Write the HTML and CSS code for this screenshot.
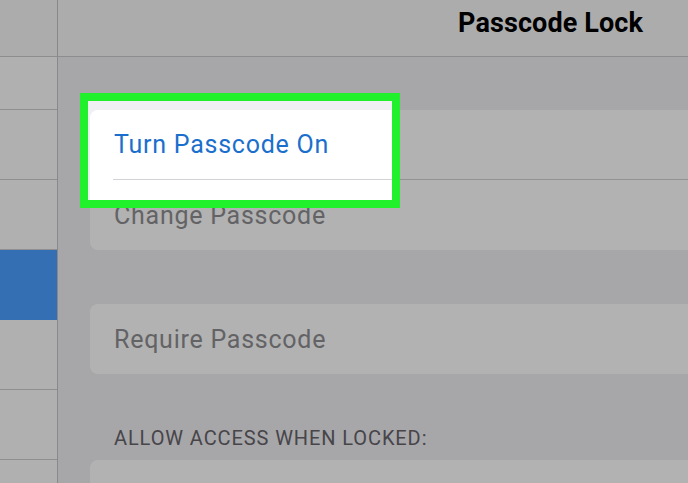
FILE: index.html
```html
<!DOCTYPE html>
<html>
<head>
  <title>Passcode Lock</title>
  <link rel="stylesheet" href="styles.css">
</head>
<body>

  <div class="screen">
    <aside class="sidebar">
      <div class="side-head"></div>
      <div class="side-row short"></div>
      <div class="side-row"></div>
      <div class="side-row"></div>
      <div class="side-row active"></div>
      <div class="side-row"></div>
      <div class="side-row"></div>
      <div class="side-row"></div>
    </aside>

    <section class="detail">
      <header class="detail-head">
        <h1>Passcode Lock</h1>
      </header>

      <div class="detail-body">
        <div class="spotlight"></div>

        <div class="group">
          <div class="cell link">Turn Passcode On</div>
          <div class="cell disabled">Change Passcode</div>
        </div>

        <div class="group">
          <div class="cell disabled">Require Passcode</div>
        </div>

        <p class="group-title">ALLOW ACCESS WHEN LOCKED:</p>

        <div class="group">
          <div class="cell"></div>
        </div>
      </div>
    </section>
  </div>

</body>
</html>
```

FILE: styles.css
```css
body {
  margin: 0;
  font-family: Roboto, 'Liberation Sans', sans-serif;
  background: #efeff4;
  overflow: hidden;
}

.screen {
  display: flex;
  width: 688px;
  height: 483px;
  overflow: hidden;
}

/* left master list */
.sidebar {
  width: 57px;
  flex-shrink: 0;
  background: #fcfcfc;
  border-right: 1px solid #c4c4c8;
}

.side-head {
  height: 56px;
  background: #f7f7f7;
  border-bottom: 1px solid #cbcbcf;
}

.side-row {
  height: 69px;
  border-bottom: 1px solid #cdcdd1;
}

.side-row.short {
  height: 52px;
}

.side-row.active {
  background: #4aa0ff;
  border-bottom-color: #4aa0ff;
}

/* detail pane */
.detail {
  flex: 1;
  min-width: 0;
}

.detail-head {
  height: 57px;
  box-sizing: border-box;
  background: #f7f7f7;
  border-bottom: 1px solid #cbcbcf;
  display: flex;
  align-items: center;
  justify-content: flex-end;
  padding: 0 45px 11px 0;
}

.detail-head h1 {
  margin: 0;
  font-size: 27px;
  font-weight: 700;
  color: #000;
  letter-spacing: 0.1px;
}

.detail-body {
  position: relative;
  padding: 53px 0 0 32px;
}

/* highlight box, dims everything around it */
.spotlight {
  position: absolute;
  left: 22px;
  top: 36px;
  width: 320px;
  height: 115px;
  box-sizing: border-box;
  border: 8px solid #21f02d;
  box-shadow: 0 0 0 2000px rgba(0, 0, 0, 0.3);
  z-index: 2;
}

.group {
  background: #fff;
  border-radius: 8px 0 0 8px;
  margin-right: -20px;
  padding-left: 23px;
  margin-bottom: 54px;
}

.cell {
  height: 69px;
  display: flex;
  align-items: center;
  padding-left: 1px;
  font-size: 25px;
  letter-spacing: 0.75px;
  border-bottom: 1px solid #d2d2d6;
}

.cell:last-child {
  height: 70px;
  border-bottom: none;
}

.link {
  color: #1b6fcc;
}

.disabled {
  color: #8f8f93;
}

.group-title {
  margin: 0 0 12px;
  padding-left: 24px;
  font-size: 20px;
  line-height: 20px;
  letter-spacing: 0.9px;
  color: #676369;
}
```
